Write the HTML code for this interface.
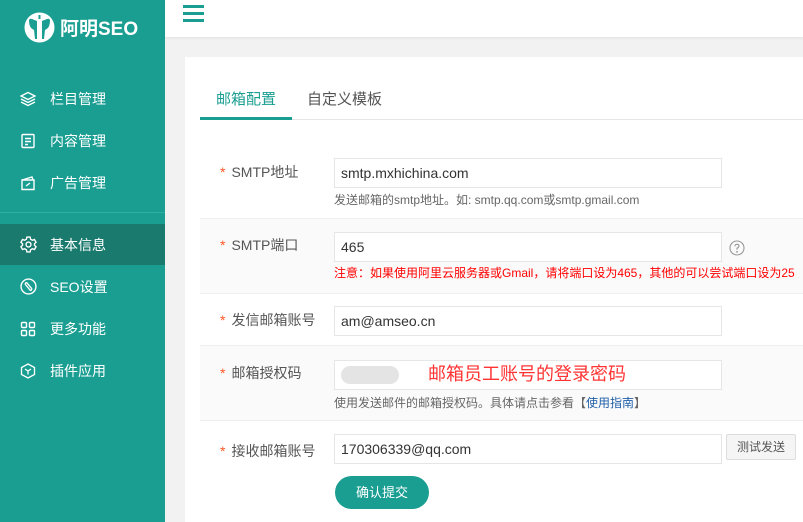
<!DOCTYPE html>
<html><head><meta charset="utf-8"><style>
*{margin:0;padding:0;box-sizing:border-box}
body{width:803px;height:522px;overflow:hidden;background:#f2f2f2;font-family:"Liberation Sans","Noto Sans CJK SC",sans-serif;position:relative}
.side{position:absolute;left:0;top:0;width:165px;height:522px;background:#1a9e92;color:#fff}
.logo{position:absolute;left:24px;top:12px;display:flex;align-items:center}
.logo span{font-size:19px;font-weight:bold;margin-left:5px}
.mi{position:absolute;left:0;width:165px;height:41px;display:flex;align-items:center;font-size:14px}
.mi svg{position:absolute;left:20px}
.mi span{position:absolute;left:50px}
.act{background:#1a7a6e}
.sep{position:absolute;left:0;top:212px;width:165px;height:1px;background:#2bb0a3}
.hdr{position:absolute;left:165px;top:0;width:638px;height:37px;background:#fff;box-shadow:0 1px 3px rgba(0,0,0,.08)}
.burger{position:absolute;left:18px;top:5px;width:21px}
.burger i{display:block;height:3px;background:#1a9e92;margin-bottom:4px}
.card{position:absolute;left:185px;top:57px;width:618px;height:465px;background:#fff}
.tabs{position:absolute;left:15px;top:0;width:603px;height:63px;border-bottom:1px solid #e6e6e6}
.tab{position:absolute;top:31px;font-size:15px;color:#555}
.tab.on{color:#1a9e92}
.ul{position:absolute;left:0;top:60px;width:92px;height:3px;background:#1a9e92}
.row{position:absolute;left:15px;width:603px;border-bottom:1px solid #eee}
.gray{background:#fafafa}
.lab{position:absolute;left:20px;font-size:14px;color:#555}
.lab b{color:#ff5722;font-weight:normal;margin-right:6px}
.inp{position:absolute;left:134px;width:388px;height:30px;border:1px solid #e6e6e6;background:#fff;font-size:14px;color:#333;padding-left:6px;line-height:28px}
.help{position:absolute;left:134px;font-size:12px;color:#666}
</style></head><body>
<div class="side">
 <div class="logo">
  <svg width="31" height="31" viewBox="0 0 31 31"><circle cx="15.5" cy="15.5" r="15" fill="#fff"/><path d="M5 9 Q5 6 8 7 L13 9 L13 27 L11 27 L10 18 Q5 16 5 9Z M26 9 Q26 6 23 7 L18 9 L18 27 L20 27 L21 18 Q26 16 26 9Z" fill="#1a9e92"/><rect x="14.5" y="3" width="2" height="4" fill="#1a9e92"/></svg>
  <span>阿明SEO</span>
 </div>
 <div class="mi" style="top:78px"><svg width="16" height="16" viewBox="0 0 16 16" fill="none" stroke="#fff" stroke-width="1.4"><path d="M8 1.5 L15 5 L8 8.5 L1 5Z M1 8 L8 11.5 L15 8 M1 11 L8 14.5 L15 11"/></svg><span>栏目管理</span></div>
 <div class="mi" style="top:120px"><svg width="16" height="16" viewBox="0 0 16 16" fill="none" stroke="#fff" stroke-width="1.4"><rect x="2" y="1.5" width="12" height="13" rx="1"/><path d="M5 5.5h6M5 8.5h6M5 11.5h3"/></svg><span>内容管理</span></div>
 <div class="mi" style="top:162px"><svg width="16" height="16" viewBox="0 0 16 16" fill="none" stroke="#fff" stroke-width="1.4"><path d="M2 5 L12 2 L13 5 M2 5 H14 V14.5 H2Z M6 11 L10 8"/></svg><span>广告管理</span></div>
 <div class="sep"></div>
 <div class="mi act" style="top:224px"><svg width="17" height="17" viewBox="0 0 16 16" fill="none" stroke="#fff" stroke-width="1.3"><path d="M6.5 1h3l.5 2 1.6 1 2-.7 1.5 2.6-1.5 1.4v1.4l1.5 1.4-1.5 2.6-2-.7-1.6 1-.5 2h-3l-.5-2-1.6-1-2 .7L.9 10.1 2.4 8.7V7.3L.9 5.9 2.4 3.3l2 .7 1.6-1z"/><circle cx="8" cy="8" r="2.3"/></svg><span>基本信息</span></div>
 <div class="mi" style="top:266px"><svg width="17" height="17" viewBox="0 0 16 16" fill="none" stroke="#fff" stroke-width="1.3"><circle cx="8" cy="8" r="7"/><path d="M5 6 L9.5 11.5 Q11 12 11 10 L6.5 4.5 Q5 4 5 6Z"/></svg><span>SEO设置</span></div>
 <div class="mi" style="top:308px"><svg width="16" height="16" viewBox="0 0 16 16" fill="none" stroke="#fff" stroke-width="1.4"><rect x="1.5" y="1.5" width="5" height="5" rx="1"/><rect x="9.5" y="1.5" width="5" height="5" rx="1"/><rect x="1.5" y="9.5" width="5" height="5" rx="1"/><rect x="9.5" y="9.5" width="5" height="5" rx="1"/></svg><span>更多功能</span></div>
 <div class="mi" style="top:350px"><svg width="16" height="16" viewBox="0 0 16 16" fill="none" stroke="#fff" stroke-width="1.3"><path d="M8 1 L14.5 4.5 V11.5 L8 15 L1.5 11.5 V4.5Z M5 6 L8 8 L11 6 M8 8 V11.5"/></svg><span>插件应用</span></div>
</div>
<div class="hdr"><div class="burger"><i></i><i></i><i></i></div></div>
<div class="card">
 <div class="tabs"><div class="tab on" style="left:16px">邮箱配置</div><div class="tab" style="left:107px">自定义模板</div><div class="ul"></div></div>
 <div class="row" style="top:83px;height:79px">
  <div class="lab" style="top:22px"><b>*</b>SMTP地址</div>
  <div class="inp" style="top:18px">smtp.mxhichina.com</div>
  <div class="help" style="top:51px">发送邮箱的smtp地址。如: smtp.qq.com或smtp.gmail.com</div>
 </div>
 <div class="row gray" style="top:162px;height:75px">
  <div class="lab" style="top:16px"><b>*</b>SMTP端口</div>
  <div class="inp" style="top:13px">465</div>
  <svg style="position:absolute;left:529px;top:21px" width="16" height="16" viewBox="0 0 16 16" fill="none" stroke="#999" stroke-width="1.1"><circle cx="8" cy="8" r="7"/><path d="M6 6.2 Q6 4.3 8 4.3 Q10 4.3 10 6 Q10 7.2 8 8.2 V9.8"/><circle cx="8" cy="11.8" r=".4"/></svg>
  <div class="help" style="top:45px;color:#f00;white-space:nowrap">注意：如果使用阿里云服务器或Gmail，请将端口设为465，其他的可以尝试端口设为25</div>
 </div>
 <div class="row" style="top:237px;height:52px">
  <div class="lab" style="top:16px"><b>*</b>发信邮箱账号</div>
  <div class="inp" style="top:12px">am@amseo.cn</div>
 </div>
 <div class="row gray" style="top:289px;height:75px">
  <div class="lab" style="top:17px"><b>*</b>邮箱授权码</div>
  <div class="inp" style="top:14px"><span style="display:inline-block;width:58px;height:18px;margin-top:5px;background:#e4e4e4;border-radius:9px;vertical-align:top"></span><span style="position:absolute;left:93px;top:-1px;color:#f33;font-size:18px">邮箱员工账号的登录密码</span></div>
  <div class="help" style="top:48px">使用发送邮件的邮箱授权码。具体请点击参看【<span style="color:#1e5fa8">使用指南</span>】</div>
 </div>
 <div class="row" style="top:364px;height:101px;border:0">
  <div class="lab" style="top:20px"><b>*</b>接收邮箱账号</div>
  <div class="inp" style="top:13px">170306339@qq.com</div>
  <div style="position:absolute;left:526px;top:13px;width:70px;height:26px;border:1px solid #ddd;border-radius:2px;background:#f5f5f5;font-size:12px;color:#555;text-align:center;line-height:24px">测试发送</div>
  <div style="position:absolute;left:135px;top:55px;width:94px;height:33px;border-radius:17px;background:#1a9e92;color:#fff;font-size:13px;text-align:center;line-height:33px">确认提交</div>
 </div>
</div>
</body></html>
